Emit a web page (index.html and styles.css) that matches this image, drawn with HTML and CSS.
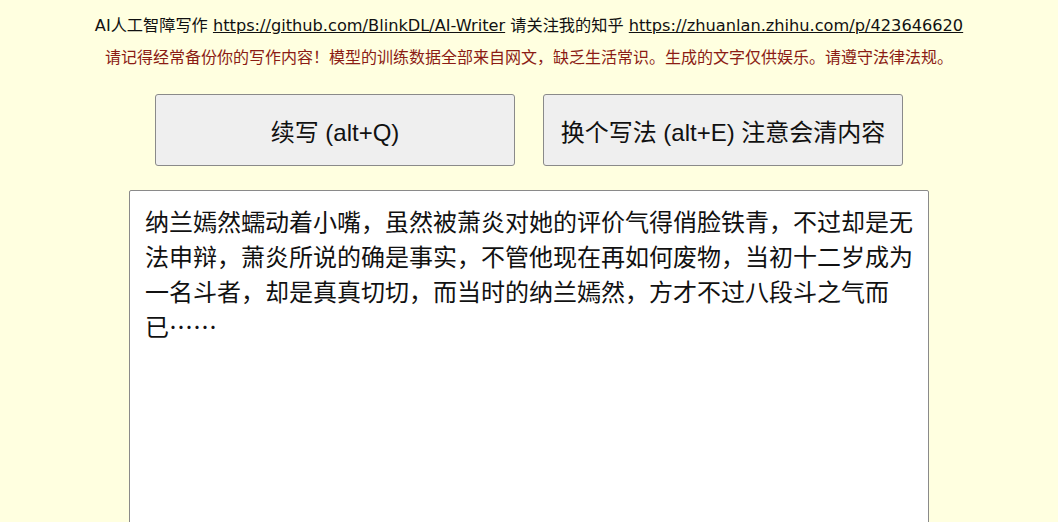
FILE: index.html
```html
<!DOCTYPE html>
<html lang="zh-CN">
<head>
<meta charset="utf-8">
<title>AI人工智障写作</title>
<link rel="stylesheet" href="styles.css">
</head>
<body>
<div class="page">
  <p class="intro">AI人工智障写作 <a href="#">https://github.com/BlinkDL/AI-Writer</a> 请关注我的知乎 <a href="#">https://zhuanlan.zhihu.com/p/423646620</a></p>
  <p class="warn">请记得经常备份你的写作内容！模型的训练数据全部来自网文，缺乏生活常识。生成的文字仅供娱乐。请遵守法律法规。</p>
  <div class="actions">
    <button class="btn" type="button">续写 (alt+Q)</button>
    <button class="btn" type="button">换个写法 (alt+E) 注意会清内容</button>
  </div>
  <textarea class="editor">纳兰嫣然蠕动着小嘴，虽然被萧炎对她的评价气得俏脸铁青，不过却是无法申辩，萧炎所说的确是事实，不管他现在再如何废物，当初十二岁成为一名斗者，却是真真切切，而当时的纳兰嫣然，方才不过八段斗之气而已……</textarea>
</div>
</body>
</html>
```

FILE: styles.css
```css
html, body {
  margin: 0;
  padding: 0;
  background: #ffffe0;
  height: 100%;
  overflow: hidden;
}
.page {
  display: flex;
  flex-direction: column;
  align-items: center;
  font-family: "Liberation Sans", "Noto Sans CJK SC", sans-serif;
  color: #111;
  padding-top: 15px;
}
.intro {
  margin: 0;
  font-family: "DejaVu Sans", "Noto Sans CJK SC", sans-serif;
  font-size: 16.2px;
  line-height: 22px;
  text-align: center;
}
.intro a {
  color: #111;
  text-decoration: underline;
}
.warn {
  margin: 8px 0 0;
  font-family: "Noto Sans CJK SC", sans-serif;
  font-size: 16px;
  line-height: 22px;
  color: #8b1c14;
  text-align: center;
}
.actions {
  display: flex;
  gap: 28px;
  margin-top: 27px;
}
.btn {
  width: 360px;
  height: 72px;
  background: #efefef;
  border: 1px solid #8a8a8a;
  border-radius: 3px;
  font-family: "Liberation Sans", "Noto Sans CJK SC", sans-serif;
  font-size: 24px;
  color: #111;
  padding: 0;
}
.editor {
  box-sizing: border-box;
  width: 800px;
  height: 420px;
  margin-top: 24px;
  padding: 12px 15px;
  border: 1px solid #8a8a8a;
  border-radius: 2px;
  background: #fff;
  font-family: "Noto Sans CJK SC", sans-serif;
  font-size: 24px;
  line-height: 35px;
  color: #111;
  resize: none;
  outline: none;
}
```
